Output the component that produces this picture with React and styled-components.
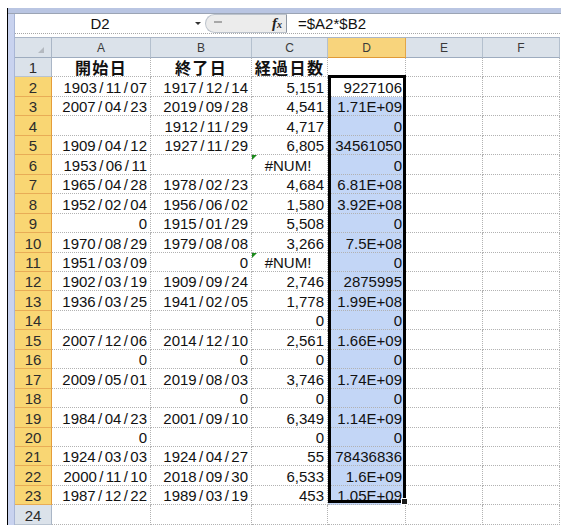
import styled, { createGlobalStyle } from 'styled-components';

const GlobalStyle = createGlobalStyle`
  html, body { margin: 0; padding: 0; background: #ffffff; }
  body { font-family: "Liberation Sans", Arial, sans-serif; color: #000; }
`;

const COLUMNS = [37, 99, 101, 76, 78, 77, 77];
const GRID = COLUMNS.map((w) => `${w}px`).join(' ');
const LETTERS = ['A', 'B', 'C', 'D', 'E', 'F'];

// A, B, C, D of rows 1..23 (row 24 is empty)
const DATA = [
  ['開始日', '終了日', '経過日数', ''],
  ['1903/11/07', '1917/12/14', '5,151', '9227106'],
  ['2007/04/23', '2019/09/28', '4,541', '1.71E+09'],
  ['', '1912/11/29', '4,717', '0'],
  ['1909/04/12', '1927/11/29', '6,805', '34561050'],
  ['1953/06/11', '', '#NUM!', '0'],
  ['1965/04/28', '1978/02/23', '4,684', '6.81E+08'],
  ['1952/02/04', '1956/06/02', '1,580', '3.92E+08'],
  ['0', '1915/01/29', '5,508', '0'],
  ['1970/08/29', '1979/08/08', '3,266', '7.5E+08'],
  ['1951/03/09', '0', '#NUM!', '0'],
  ['1902/03/19', '1909/09/24', '2,746', '2875995'],
  ['1936/03/25', '1941/02/05', '1,778', '1.99E+08'],
  ['', '', '0', '0'],
  ['2007/12/06', '2014/12/10', '2,561', '1.66E+09'],
  ['0', '0', '0', '0'],
  ['2009/05/01', '2019/08/03', '3,746', '1.74E+09'],
  ['', '0', '0', '0'],
  ['1984/04/23', '2001/09/10', '6,349', '1.14E+09'],
  ['0', '', '0', '0'],
  ['1924/03/03', '1924/04/27', '55', '78436836'],
  ['2000/11/10', '2018/09/30', '6,533', '1.6E+09'],
  ['1987/12/22', '1989/03/19', '453', '1.05E+09'],
  ['', '', '', ''],
];

// rows are 19 or 20px, like the sheet's 19.45px default
const rowTop = (i) => Math.round(i * 19.45);
const rowHeight = (i) => rowTop(i + 1) - rowTop(i);

const Page = styled.div`
  padding: 8px 0 0 7px;
`;

const Window = styled.div`
  width: 553px;
  border-left: 1px solid #000;
`;

const TitleStrip = styled.div`
  height: 5px;
  background: #b9c5e2;
  border-bottom: 1px solid #9ba4b4;
`;

const Frame = styled.div`
  display: flex;
`;

const SideStrip = styled.div`
  width: 6px;
  background: #c9d3ef;
  border-right: 1px solid #a9b6d6;
`;

const Main = styled.div`
  width: 545px;
`;

const FormulaBar = styled.div`
  display: flex;
  height: 20px;
  box-sizing: border-box;
  border-bottom: 1px dotted #a6a6a6;
  margin-bottom: 3px;
  font-size: 15px;
`;

const NameBox = styled.div`
  width: 170px;
  display: flex;
  align-items: center;
  justify-content: center;
  color: #111;
`;

const DropArrow = styled.div`
  width: 20px;
  display: flex;
  align-items: center;
  justify-content: center;

  &::after {
    content: '';
    margin-left: 6px;
    border-left: 3px solid transparent;
    border-right: 3px solid transparent;
    border-top: 3px solid #333;
  }
`;

const FxPanel = styled.div`
  width: 82px;
  box-sizing: border-box;
  display: flex;
  align-items: center;
  justify-content: space-between;
  padding: 0 4px 0 8px;
  background: #ececec;
  border: 1px solid #bcc3cc;
  border-right-color: #8e96a2;
  border-radius: 10px 0 0 10px;
`;

const CollapseDash = styled.span`
  width: 8px;
  height: 2px;
  margin-bottom: 3px;
  background: #a8a8a8;
`;

const FxLabel = styled.span`
  font-family: "Liberation Serif", "Times New Roman", serif;
  font-style: italic;
  font-weight: bold;
  font-size: 15px;
  color: #222;

  & sub {
    font-size: 10px;
    vertical-align: baseline;
  }
`;

const FormulaInput = styled.div`
  flex: 1;
  display: flex;
  align-items: center;
  padding-left: 11px;
  color: #111;
`;

const Sheet = styled.div`
  position: relative;
`;

const Row = styled.div`
  display: grid;
  grid-template-columns: ${GRID};
  height: ${(p) => p.$h}px;
`;

const HeadRow = styled(Row)`
  border-top: 1px solid #a9b5c6;
`;

const Corner = styled.div`
  position: relative;
  background: #dbe2ea;
  border-right: 1px solid #aab6c6;
  border-bottom: 1px solid #9eacbf;

  &::after {
    content: '';
    position: absolute;
    right: 7px;
    bottom: 4px;
    border-left: 6px solid transparent;
    border-bottom: 6px solid #b4b9c0;
  }
`;

const ColHead = styled.div`
  display: flex;
  align-items: center;
  justify-content: center;
  font-size: 12px;
  color: #3a3a3a;
  background: ${(p) => (p.$active ? '#f8d47c' : '#dbe2ea')};
  border-right: 1px solid ${(p) => (p.$active ? '#e2a648' : '#b4c0ce')};
  border-bottom: 1px solid ${(p) => (p.$active ? '#e09a38' : '#9eacbf')};
`;

const RowHead = styled.div`
  display: flex;
  align-items: flex-end;
  justify-content: center;
  font-size: 15px;
  line-height: 17px;
  color: #2c2c2c;
  background: ${(p) => (p.$active ? '#f9d673' : '#dbe2ea')};
  border-right: 1px solid ${(p) => (p.$active ? '#e59d3a' : '#aab6c6')};
  border-bottom: 1px solid ${(p) => (p.$active ? '#e8ac56' : '#b8c3d0')};
`;

const Cell = styled.div`
  position: relative;
  display: flex;
  align-items: ${(p) => (p.$head ? 'center' : 'flex-end')};
  justify-content: ${(p) =>
    p.$align === 'center' ? 'center' : p.$align === 'left' ? 'flex-start' : 'flex-end'};
  padding: ${(p) => (p.$head ? '0' : '0 3px 0 0')};
  white-space: nowrap;
  font-family: ${(p) =>
    p.$head
      ? '"Noto Sans CJK JP", "Liberation Sans", sans-serif'
      : '"Liberation Sans", Arial, sans-serif'};
  font-size: ${(p) => (p.$head ? '16px' : '15px')};
  font-weight: ${(p) => (p.$head ? 'bold' : 'normal')};
  letter-spacing: ${(p) => (p.$head ? '1.4px' : '0')};
  line-height: ${(p) => (p.$head ? '18px' : '17px')};
  color: #111;
  background: ${(p) => (p.$fill ? '#c3d6f6' : '#ffffff')};
  border-right: 1px dotted #b2b2b2;
  border-bottom: 1px dotted #b2b2b2;

  &::before {
    content: '';
    display: ${(p) => (p.$flag ? 'block' : 'none')};
    position: absolute;
    top: 0;
    left: 0;
    border-top: 5px solid #1b8a1b;
    border-right: 5px solid transparent;
  }
`;

const Slash = styled.span`
  margin: 0 2.4px;
`;

const Selection = styled.div`
  position: absolute;
  left: 313px;
  top: 38px;
  width: 78px;
  height: 428px;
  box-sizing: border-box;
  border: 3px solid #000;
  pointer-events: none;
`;

const FillHandle = styled.div`
  position: absolute;
  right: -5px;
  bottom: -5px;
  width: 5px;
  height: 5px;
  background: #1a1a1a;
  border: 1px solid #ffffff;
`;

function Value({ text }) {
  if (!/^\d{4}\/\d{2}\/\d{2}$/.test(text)) return text;
  const parts = text.split('/');
  return (
    <>
      {parts[0]}
      <Slash>/</Slash>
      {parts[1]}
      <Slash>/</Slash>
      {parts[2]}
    </>
  );
}

function SheetRow({ index, values }) {
  const num = index + 1;
  const isTitle = num === 1;
  const inSelection = num >= 2 && num <= 23;
  return (
    <Row $h={rowHeight(index)}>
      <RowHead $active={inSelection}>{num}</RowHead>
      {values.map((v, c) => {
        const isError = v === '#NUM!';
        return (
          <Cell
            key={c}
            $head={isTitle}
            $align={isTitle || isError ? 'center' : 'right'}
            $flag={isError}
            $fill={c === 3 && num >= 3 && num <= 23}
          >
            <Value text={v} />
          </Cell>
        );
      })}
      <Cell />
      <Cell />
    </Row>
  );
}

export default function App() {
  return (
    <>
      <GlobalStyle />
      <Page>
        <Window>
          <TitleStrip />
          <Frame>
            <SideStrip />
            <Main>
              <FormulaBar>
                <NameBox>D2</NameBox>
                <DropArrow />
                <FxPanel>
                  <CollapseDash />
                  <FxLabel>
                    f<sub>x</sub>
                  </FxLabel>
                </FxPanel>
                <FormulaInput>=$A2*$B2</FormulaInput>
              </FormulaBar>
              <Sheet>
                <HeadRow $h={20}>
                  <Corner />
                  {LETTERS.map((l) => (
                    <ColHead key={l} $active={l === 'D'}>
                      {l}
                    </ColHead>
                  ))}
                </HeadRow>
                {DATA.map((values, i) => (
                  <SheetRow key={i} index={i} values={values} />
                ))}
                <Selection>
                  <FillHandle />
                </Selection>
              </Sheet>
            </Main>
          </Frame>
        </Window>
      </Page>
    </>
  );
}
